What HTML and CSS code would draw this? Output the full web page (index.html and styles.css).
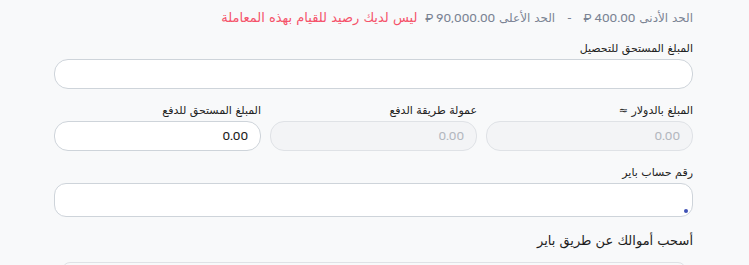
FILE: index.html
```html
<!DOCTYPE html>
<html lang="ar" dir="rtl">
<head>
<meta charset="utf-8">
<link rel="stylesheet" href="styles.css">
</head>
<body>
<div class="wrap">
  <div class="limits">
    <span class="muted">الحد الأدنى <span class="num">₽ 400.00</span></span>
    <span class="muted dash">-</span>
    <span class="muted">الحد الأعلى <span class="num">₽ 90,000.00</span></span>
    <span class="error">ليس لديك رصيد للقيام بهذه المعاملة</span>
  </div>

  <div class="field">
    <label class="label">المبلغ المستحق للتحصيل</label>
    <div class="input"></div>
  </div>

  <div class="row">
    <div class="field">
      <label class="label">المبلغ بالدولار ≈</label>
      <div class="input disabled"><span class="num">0.00</span></div>
    </div>
    <div class="field">
      <label class="label">عمولة طريقة الدفع</label>
      <div class="input disabled"><span class="num">0.00</span></div>
    </div>
    <div class="field">
      <label class="label">المبلغ المستحق للدفع</label>
      <div class="input"><span class="num dark">0.00</span></div>
    </div>
  </div>

  <div class="field">
    <label class="label">رقم حساب باير</label>
    <div class="input area"><span class="grip"></span></div>
  </div>

  <h3 class="heading">أسحب أموالك عن طريق باير</h3>
  <div class="box"></div>
</div>
</body>
</html>
```

FILE: styles.css
```css
html, body {
  margin: 0;
  padding: 0;
  background: #f8f9fa;
  overflow: hidden;
}
body {
  font-family: "DejaVu Sans", "Noto Sans", sans-serif;
  color: #212529;
}
.wrap {
  margin: 0 56px 0 54px;
  padding-top: 9px;
  direction: rtl;
}
.limits {
  display: flex;
  gap: 8px;
  font-size: 12px;
  line-height: 18px;
  height: 18px;
  white-space: nowrap;
}
.muted { color: #7b8494; }
.dash { margin: 0 4px; }
.error { color: #f5536a; font-size: 13px; }
.num {
  font-family: "Rubik", "Open Sans", "Noto Sans", sans-serif;
  direction: ltr;
  unicode-bidi: isolate;
  font-size: 12px;
}
.field {
  display: flex;
  flex-direction: column;
}
.wrap > .field:nth-of-type(2) { margin-top: 14px; }
.label {
  font-size: 11px;
  line-height: 15px;
  height: 15px;
  margin-bottom: 3px;
  color: #222;
}
.input {
  height: 28px;
  border: 1px solid #ced4da;
  border-radius: 14px;
  background: #fff;
  display: flex;
  align-items: center;
  padding: 0 12px;
  font-size: 12px;
  position: relative;
}
.input.disabled {
  background: #f3f4f6;
  border-color: #dfe2e6;
}
.input .num { color: #b3b8bf; font-size: 12px; }
.input .num.dark { color: #222; }
.row {
  display: grid;
  grid-template-columns: 1fr 1fr 1fr;
  gap: 9px;
  margin-top: 14px;
}
.wrap > .field:nth-of-type(4) { margin-top: 14px; }
.area { height: 32px; border-radius: 12px; }
.grip {
  position: absolute;
  right: 4px;
  bottom: 3px;
  width: 4px;
  height: 4px;
  border-radius: 50%;
  background: #3f51b5;
}
.heading {
  margin: 15px 0 0;
  font-size: 13px;
  font-weight: normal;
  line-height: 18px;
  color: #1d1d1d;
}
.box {
  margin-top: 12px;
  margin-left: 8px;
  margin-right: 7px;
  height: 30px;
  border: 1px solid #dfe2e6;
  border-radius: 8px;
  background: #f8f9fa;
}
```
